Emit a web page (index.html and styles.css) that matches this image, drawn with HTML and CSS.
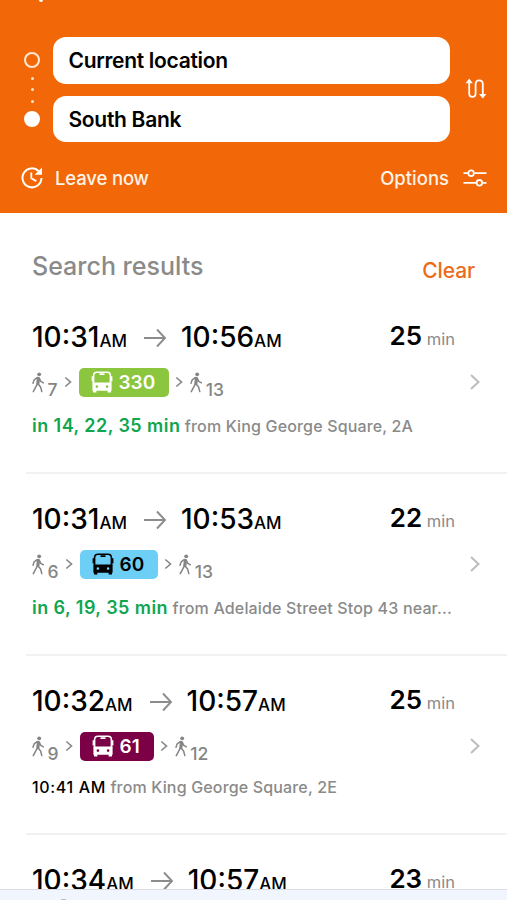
FILE: index.html
```html
<!DOCTYPE html>
<html lang="en">
<head>
    <meta charset="UTF-8">
    <meta name="viewport" content="width=device-width, initial-scale=1.0">
    <title>Journey planner</title>
    <link rel="stylesheet" href="styles.css">
</head>
<body>
    <!-- Shared icons -->
    <svg class="icon-defs" aria-hidden="true">
        <symbol id="walk" viewBox="0 0 12 21">
            <circle cx="7.2" cy="2.3" r="1.9" fill="currentColor"/>
            <path d="M6 5.6L5 12.6L1.3 19.6M6 12l2.6 3 1.2 4.6M5.2 5.6L2.2 7.8 1 11.2M7.2 6.2l1.6 3.2 2.6 1.4" fill="none" stroke="currentColor" stroke-width="1.5" stroke-linecap="round" stroke-linejoin="round"/>
            <path d="M4.8 5h2.6l.6 3-.8 5H4.6z" fill="currentColor"/>
        </symbol>
        <symbol id="next" viewBox="0 0 8 12">
            <path d="M1.3 1.5L6.5 6l-5.2 4.5" fill="none" stroke="currentColor" stroke-width="1.6"/>
        </symbol>
        <symbol id="arrow" viewBox="0 0 24 20">
            <path d="M1 10h21M14 1.5l8 8.5-8 8.5" fill="none" stroke="currentColor" stroke-width="1.9"/>
        </symbol>
        <symbol id="chevron" viewBox="0 0 12 18">
            <path d="M2 2l7.5 7L2 16" fill="none" stroke="currentColor" stroke-width="2"/>
        </symbol>
        <symbol id="bus" viewBox="0 0 22 22">
            <path d="M2.6 13V4.8Q2.6 1.2 6 1.2h10Q19.4 1.2 19.4 4.8V13" fill="none" stroke="currentColor" stroke-width="1.6"/>
            <path d="M8.5 2.2h5v1.7h-5zM.6 5.2h1.6v5.2H.6zM19.8 5.2h1.6v5.2h-1.6z" fill="currentColor"/>
            <path fill-rule="evenodd" d="M1.4 11.5h19.2v8.2h-.6v1.8h-3.4v-1.8H5.4v1.8H2v-1.8h-.6zM4.6 15.6a1.3 1.3 0 1 0 2.6 0 1.3 1.3 0 1 0-2.6 0M14.8 15.6a1.3 1.3 0 1 0 2.6 0 1.3 1.3 0 1 0-2.6 0" fill="currentColor"/>
        </symbol>
    </svg>

    <header class="planner">
        <span class="back-tip"></span>
        <div class="route">
            <div class="route-marks">
                <span class="mark"></span>
                <span class="dot"></span>
                <span class="dot"></span>
                <span class="dot"></span>
                <span class="mark mark-end"></span>
            </div>
            <div class="fields">
                <div class="field">Current location</div>
                <div class="field">South Bank</div>
            </div>
            <svg class="swap" viewBox="0 0 22 22">
                <path d="M4.2 4v11.2q0 3.6 3.2 3.6t3.2-3.6V6q0-3.6 3.6-3.6t3.6 3.6v12" fill="none" stroke="#fff" stroke-width="1.8"/>
                <path d="M.6 5.2L4.2.6l3.6 4.6zM14 16l3.8 4.6 3.6-4.6z" fill="#fff"/>
            </svg>
        </div>
        <div class="settings">
            <svg class="clock" viewBox="0 0 24 24">
                <path d="M18.8 5.2A9.5 9.5 0 1 0 21.5 12" fill="none" stroke="#fff" stroke-width="2"/>
                <path d="M22 1.5v7.3h-7.3z" fill="#fff"/>
                <path d="M11.3 6.5v5.8l5 2.8" fill="none" stroke="#fff" stroke-width="1.8"/>
            </svg>
            <span class="leave">Leave now</span>
            <span class="options">Options</span>
            <svg class="sliders" viewBox="0 0 24 20">
                <path d="M.5 5.2h4.4M11.3 5.2h12.2M.5 14.8h12.8M19.5 14.8h4" stroke="#fff" stroke-width="1.8"/>
                <circle cx="8.1" cy="5.2" r="2.8" fill="none" stroke="#fff" stroke-width="1.8"/>
                <circle cx="16.4" cy="14.8" r="2.8" fill="none" stroke="#fff" stroke-width="1.8"/>
            </svg>
        </div>
    </header>

    <main>
        <div class="results-head">
            <h1>Search results</h1>
            <a class="clear">Clear</a>
        </div>

        <div class="trip">
            <div class="trip-body">
                <div class="times">
                    <span class="time">10:31<small>AM</small></span>
                    <svg class="arrow"><use href="#arrow"/></svg>
                    <span class="time">10:56<small>AM</small></span>
                    <span class="duration"><b>25</b> min</span>
                </div>
                <div class="legs">
                    <svg class="walk"><use href="#walk"/></svg><span class="mins">7</span>
                    <svg class="next"><use href="#next"/></svg>
                    <span class="line line-green"><svg class="bus"><use href="#bus"/></svg>330</span>
                    <svg class="next"><use href="#next"/></svg>
                    <svg class="walk"><use href="#walk"/></svg><span class="mins">13</span>
                </div>
                <p class="detail"><span class="live">in 14, 22, 35 min</span> from King George Square, 2A</p>
            </div>
            <svg class="chevron"><use href="#chevron"/></svg>
        </div>

        <div class="trip">
            <div class="trip-body">
                <div class="times">
                    <span class="time">10:31<small>AM</small></span>
                    <svg class="arrow"><use href="#arrow"/></svg>
                    <span class="time">10:53<small>AM</small></span>
                    <span class="duration"><b>22</b> min</span>
                </div>
                <div class="legs">
                    <svg class="walk"><use href="#walk"/></svg><span class="mins">6</span>
                    <svg class="next"><use href="#next"/></svg>
                    <span class="line line-blue"><svg class="bus"><use href="#bus"/></svg>60</span>
                    <svg class="next"><use href="#next"/></svg>
                    <svg class="walk"><use href="#walk"/></svg><span class="mins">13</span>
                </div>
                <p class="detail"><span class="live">in 6, 19, 35 min</span> from Adelaide Street Stop 43 near...</p>
            </div>
            <svg class="chevron"><use href="#chevron"/></svg>
        </div>

        <div class="trip trip-scheduled">
            <div class="trip-body">
                <div class="times">
                    <span class="time">10:32<small>AM</small></span>
                    <svg class="arrow"><use href="#arrow"/></svg>
                    <span class="time">10:57<small>AM</small></span>
                    <span class="duration"><b>25</b> min</span>
                </div>
                <div class="legs">
                    <svg class="walk"><use href="#walk"/></svg><span class="mins">9</span>
                    <svg class="next"><use href="#next"/></svg>
                    <span class="line line-maroon"><svg class="bus"><use href="#bus"/></svg>61</span>
                    <svg class="next"><use href="#next"/></svg>
                    <svg class="walk"><use href="#walk"/></svg><span class="mins">12</span>
                </div>
                <p class="detail"><span class="scheduled">10:41 AM</span> from King George Square, 2E</p>
            </div>
            <svg class="chevron"><use href="#chevron"/></svg>
        </div>

        <div class="trip trip-last">
            <div class="trip-body">
                <div class="times">
                    <span class="time">10:34<small>AM</small></span>
                    <svg class="arrow"><use href="#arrow"/></svg>
                    <span class="time">10:57<small>AM</small></span>
                    <span class="duration"><b>23</b> min</span>
                </div>
            </div>
        </div>
    </main>

    <div class="bottom-bar"></div>
</body>
</html>
```
FILE: styles.css
```css
* {
    box-sizing: border-box;
}

body {
    position: relative;
    margin: 0;
    height: 900px;
    overflow: hidden;
    background-color: #fff;
    color: #000;
    font-family: Inter, "Liberation Sans", sans-serif;
}

.icon-defs {
    display: none;
}

/* Header */
.planner {
    height: 213px;
    padding-top: 37px;
    background-color: #f26707;
}

.back-tip {
    position: absolute;
    top: -2px;
    left: 39px;
    width: 4px;
    height: 4px;
    border-radius: 50%;
    background-color: #fff;
}

.route {
    display: flex;
    align-items: center;
    height: 105px;
    padding-left: 24px;
}

.route-marks {
    display: flex;
    flex-direction: column;
    align-items: center;
    justify-content: space-between;
    width: 16px;
    height: 75px;
    margin-right: 13px;
}

.mark {
    width: 16px;
    height: 16px;
    border: 2px solid #ffe9d4;
    border-radius: 50%;
}

.mark-end {
    border-color: #fff;
    background-color: #fff;
}

.dot {
    width: 3px;
    height: 3px;
    border-radius: 50%;
    background-color: #ffe3ca;
}

.fields {
    display: flex;
    flex-direction: column;
    gap: 12px;
    width: 397px;
}

.field {
    height: 46.5px;
    padding-left: 15.5px;
    border-radius: 13px;
    background-color: #fff;
    font-size: 21px;
    font-weight: 600;
    letter-spacing: -0.3px;
    line-height: 48px;
}

.swap {
    width: 22px;
    height: 22px;
    margin: -2px 0 0 15px;
}

.settings {
    display: flex;
    align-items: center;
    height: 24px;
    margin-top: 24px;
    padding: 0 20px 0 20px;
    color: #fff3e6;
    font-size: 18.5px;
    font-weight: 500;
}

.clock {
    width: 24px;
    height: 24px;
}

.leave {
    margin-left: 11px;
    letter-spacing: -0.15px;
}

.options {
    margin-left: auto;
}

.sliders {
    width: 24px;
    height: 20px;
    margin-left: 14px;
}

/* Results */
.results-head {
    display: flex;
    justify-content: space-between;
    height: 79px;
    padding: 36px 32px 0;
}

h1 {
    margin: 0;
    color: #8a8a8a;
    font-size: 25px;
    font-weight: 500;
    line-height: 34px;
}

.clear {
    color: #ec6b17;
    font-size: 21px;
    font-weight: 500;
    letter-spacing: -0.1px;
    line-height: 43px;
}

.trip {
    display: flex;
    align-items: flex-start;
    height: 182px;
    margin-left: 26px;
    padding: 26px 26px 0 6px;
    border-bottom: 2px solid #f1f1f1;
}

.trip-scheduled {
    height: 179px;
}

.trip-last {
    height: 67px;
    border-bottom: none;
}

.trip-body {
    width: 423px;
}

.times {
    display: flex;
    align-items: center;
    height: 42px;
}

.time {
    font-size: 28px;
    font-weight: 500;
    line-height: 43px;
}

.time small {
    font-size: 17px;
    font-weight: 500;
}

.arrow {
    width: 24px;
    height: 20px;
    margin: -2px 14px 0 16px;
    color: #8c8c8c;
}

.duration {
    margin: -7px 0 0 auto;
    color: #8a8a8a;
    font-size: 16.5px;
    font-weight: 400;
}

.duration b {
    color: #000;
    font-size: 26px;
    font-weight: 600;
}

.legs {
    display: flex;
    align-items: center;
    height: 30px;
    margin-top: 7px;
    color: #858585;
}

.walk {
    width: 12px;
    height: 21px;
}

.mins {
    margin: 14px 0 0 3.5px;
    font-size: 17.5px;
    font-weight: 500;
}

.next {
    width: 8px;
    height: 12px;
    margin: 0 7px 0 6px;
}

.line {
    display: flex;
    align-items: center;
    height: 29px;
    padding: 0 14px 0 12px;
    border-radius: 5px;
    font-size: 19px;
    font-weight: 600;
}

.line-green {
    background-color: #8cc63e;
    color: #fff;
}

.line-blue {
    background-color: #6dcff6;
    color: #000;
}

.line-maroon {
    background-color: #7b0046;
    color: #fff;
}

.bus {
    width: 22px;
    height: 22px;
    margin-right: 6px;
}

.detail {
    margin: 17px 0 0;
    color: #8a8a8a;
    font-size: 16px;
    font-weight: 450;
    letter-spacing: 0.16px;
    line-height: 24px;
    white-space: nowrap;
}

.trip-scheduled .detail {
    margin-top: 14px;
}

.live {
    color: #10a64f;
    font-size: 18px;
    font-weight: 600;
    letter-spacing: 0.45px;
}

.scheduled {
    color: #000;
    font-weight: 500;
    letter-spacing: 0.65px;
}

.chevron {
    width: 12px;
    height: 18px;
    margin: 55px 0 0 14px;
    color: #bdbdbd;
}

/* Top edge of the tab bar */
.bottom-bar {
    position: absolute;
    top: 889px;
    left: 0;
    width: 100%;
    height: 11px;
    border-top: 1px solid #d9dde2;
    background-color: #f0f5fe;
}

/* Tip of the active tab's icon */
.bottom-bar::before {
    content: "";
    position: absolute;
    bottom: 0;
    left: 61px;
    width: 5px;
    height: 1px;
    background-color: #a9c3e8;
}
```
